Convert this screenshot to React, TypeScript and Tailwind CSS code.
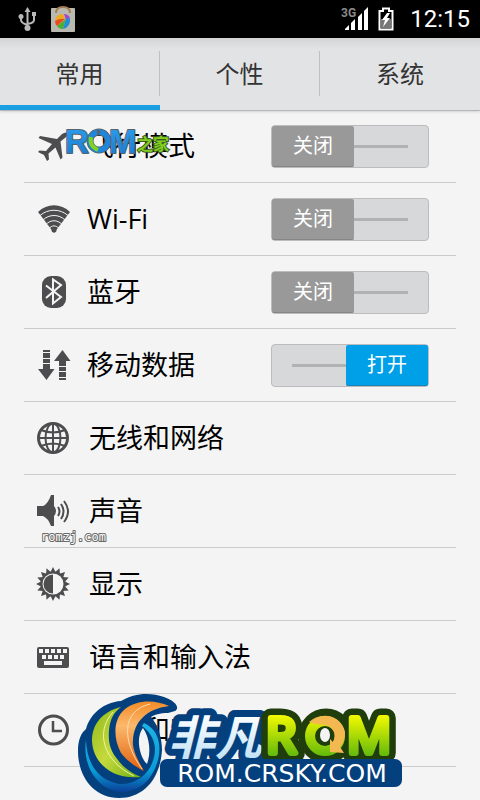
import { useState } from 'react';
import type { ReactNode } from 'react';
import clsx from 'clsx';

type ToggleItem = { id: string; label: string; icon: ReactNode; on: boolean };
type LinkItem = { id: string; label: string; icon: ReactNode };

const ICON = '#4d4d4f';

const AirplaneIcon = () => (
  <svg viewBox="0 0 36 36" className="size-9" aria-hidden="true">
    <path
      fill={ICON}
      d="M33 5c-3-1.500-6 0-8 2l-4 4-17-3-1.500 2L16 16l-6 7-6.500-.5L2 24l6 3 3 6 2-1.500-.5-6 7-6 5 12 2-2-2-16 5-4c2-2 4-4 3.500-5z"
    />
  </svg>
);

const WifiIcon = () => (
  <svg viewBox="0 0 36 36" className="size-9" aria-hidden="true">
    <path fill={ICON} d="M2 11C11 2 25 2 34 11L18 32z" />
    <g fill="none" stroke="#f4f4f4" strokeWidth="1">
      <path d="M4 14.500C12 7.500 24 7.500 32 14.500" />
      <path d="M7 19C13 13 23 13 29 19" />
      <path d="M10 23.500C14.500 18.500 21.500 18.500 26 23.500" />
      <path d="M13 27.500C16 24 20 24 23 27.500" />
    </g>
    <circle cx="18" cy="29" r="2.500" fill={ICON} />
  </svg>
);

const BluetoothIcon = () => (
  <svg viewBox="0 0 36 36" className="size-9" aria-hidden="true">
    <rect x="6" y="2" width="24" height="32" rx="9" fill={ICON} />
    <path d="M10 11.500L25 23l-8 6.500v-24L25 11 10 24" fill="none" stroke="#f4f4f4" strokeWidth="2" />
  </svg>
);

const DataIcon = () => (
  <svg viewBox="0 0 36 36" className="size-9" fill={ICON} aria-hidden="true">
    <path d="M7 3h7v2H7zM7 6h7v5H7zM7 12h7v4H7zM7 17h7v5h4.500L10.500 33 2 22h5z" />
    <path d="M23 33h7v-2h-7zM23 30h7v-5h-7zM23 24h7v-4h-7zM23 19h7v-5h4.500L26.500 3 18 14h5z" />
  </svg>
);

const GlobeIcon = () => (
  <svg viewBox="0 0 36 36" className="size-9" fill="none" stroke={ICON} strokeWidth="2" aria-hidden="true">
    <circle cx="17" cy="18" r="14.500" strokeWidth="3" />
    <ellipse cx="17" cy="18" rx="7.500" ry="14.500" />
    <path d="M17 3v30M2 18h30M5 10q12 5 24 0M5 26q12-5 24 0" />
  </svg>
);

const SoundIcon = () => (
  <svg viewBox="0 0 36 36" className="size-9" aria-hidden="true">
    <path fill={ICON} d="M1 13h6q5-2 8-11h3v11q4 5 0 10v10h-3q-3-8-8-10H1z" />
    <g fill="none" stroke={ICON} strokeWidth="2">
      <path d="M22 14q3 4.500 0 9" />
      <path d="M25 11q5 7.500 0 15" />
      <path d="M28 8q8 10.500 0 21" />
    </g>
  </svg>
);

const rays = Array.from({ length: 16 }, (_, i) => i * 22.5);

const DisplayIcon = () => (
  <svg viewBox="0 0 36 36" className="size-9" aria-hidden="true">
    {rays.map((angle) => (
      <path key={angle} d="M17 1l3 6h-6z" fill={ICON} transform={`rotate(${angle} 17 18)`} />
    ))}
    <circle cx="17" cy="18" r="12.500" fill={ICON} />
    <circle cx="17" cy="18" r="10.500" fill="#f4f4f4" />
    <path d="M17 8.500a9.500 9.500 0 0 0 0 19z" fill={ICON} />
  </svg>
);

const KeyboardIcon = () => (
  <svg viewBox="0 0 36 36" className="size-9" aria-hidden="true">
    <rect x="1" y="8" width="32" height="21" rx="2" fill={ICON} />
    <path
      fill="#f4f4f4"
      d="M3 10h4v4H3zM9 10h4v4H9zM15 10h4v4h-4zM21 10h4v4h-4zM27 10h4v4h-4zM6 16h4v4H6zM12 16h4v4h-4zM18 16h4v4h-4zM24 16h4v4h-4zM8 22h18v4H8z"
    />
  </svg>
);

const ClockIcon = () => (
  <svg viewBox="0 0 36 36" className="size-9" fill="none" stroke={ICON} strokeWidth="3" aria-hidden="true">
    <circle cx="17.500" cy="18" r="14" />
    <path d="M17 9v10h9" strokeWidth="2.500" />
  </svg>
);

const toggleItems: ToggleItem[] = [
  { id: 'airplane', label: '飞行模式', icon: <AirplaneIcon />, on: false },
  { id: 'wifi', label: 'Wi-Fi', icon: <WifiIcon />, on: false },
  { id: 'bluetooth', label: '蓝牙', icon: <BluetoothIcon />, on: false },
  { id: 'data', label: '移动数据', icon: <DataIcon />, on: true },
];

const linkItems: LinkItem[] = [
  { id: 'network', label: '无线和网络', icon: <GlobeIcon /> },
  { id: 'sound', label: '声音', icon: <SoundIcon /> },
  { id: 'display', label: '显示', icon: <DisplayIcon /> },
  { id: 'language', label: '语言和输入法', icon: <KeyboardIcon /> },
  { id: 'datetime', label: '日期和时间', icon: <ClockIcon /> },
];

const tabs = ['常用', '个性', '系统'];

function StatusBar() {
  return (
    <header className="flex h-[38px] items-center bg-black pr-[10px] pl-4 text-white">
      <svg viewBox="0 0 24 28" className="h-7 w-6" fill="none" stroke="#b8b8b8" strokeWidth="2" aria-label="USB">
        <path d="M11.500 7v16M5 12v3q0 3 6.500 5M18 10v5q0 3-6.500 4" />
        <path d="M11.500 2l3 5h-6z" fill="#b8b8b8" stroke="none" />
        <circle cx="11.500" cy="23" r="3" fill="#b8b8b8" stroke="none" />
        <circle cx="5" cy="11.500" r="2.500" fill="#b8b8b8" stroke="none" />
        <path d="M16 7h4v4h-4z" fill="#b8b8b8" stroke="none" />
      </svg>
      <svg viewBox="0 0 26 28" className="ml-[10px] h-7 w-[26px]" aria-label="应用商店">
        <rect x="1" y="3" width="24" height="24" rx="1" fill="#b9b9b0" />
        <path d="M6 8q0-6 7-6t7 6" fill="none" stroke="#a67c52" strokeWidth="2" />
        <path d="M5 16q1-7 8-7l2 5q-5-1-10 2z" fill="#f0a81c" />
        <path d="M14 9q4 0 6 4l-4 2z" fill="#a347c9" />
        <path d="M5 16q5-3 10-2l-8 7q-2-2-2-5z" fill="#e84b1c" />
        <path d="M7 21l9-7-3 10q-4 0-6-3z" fill="#4fae2c" />
        <path d="M16 14l4-1q1 9-7 11z" fill="#218dd6" />
      </svg>
      <div className="ml-auto flex items-center">
        <svg viewBox="0 0 30 28" className="h-7 w-[30px]" aria-label="3G">
          <text x="1" y="12" fontSize="12" fontWeight="700" fill="#8a8a8a" fontFamily="Roboto, sans-serif">3G</text>
          <path fill="#fff" d="M5 25v-1l4-4v5zM11 25v-7l4-4v11zM18 25V12l4-4v17zM24 25V6l4-4v23z" />
        </svg>
        <svg viewBox="0 0 16 24" className="ml-2 h-6 w-4" aria-label="充电中">
          <path d="M1.500 4H5V1.500h6V4h3.500v18.500h-13z" fill="#000" stroke="#fff" strokeWidth="2" />
          <path d="M3 12h10v9H3z" fill="#777" />
          <path d="M9 6L4 13h3l-2 7 7-9H9l3-5z" fill="#fff" />
        </svg>
        <time className="ml-4 font-[Roboto,sans-serif] text-2xl leading-8">12:15</time>
      </div>
    </header>
  );
}

function Toggle({ id, on, onChange }: { id: string; on: boolean; onChange: () => void }) {
  return (
    <button
      type="button"
      role="switch"
      aria-checked={on}
      aria-labelledby={id}
      onClick={onChange}
      className={clsx(
        'mr-[27px] flex h-[43px] w-[158px] shrink-0 items-center rounded-sm border border-[#bcbcbe] bg-[#d7d8da]',
        on ? 'flex-row-reverse' : 'flex-row',
      )}
    >
      <span
        className={clsx(
          'flex h-full w-[82px] items-center justify-center rounded-xs border-b text-xl leading-6 text-white',
          on ? 'border-[#1782b5] bg-[#00a0e9]' : 'border-[#858585] bg-[#999999]',
        )}
      >
        {on ? '打开' : '关闭'}
      </span>
      <span className="h-[3px] w-[54px] bg-[#b1b2b4]" />
    </button>
  );
}

// "ROM之家" stamp over the first row
function RomHomeMark() {
  return (
    <svg viewBox="62 124 114 36" className="pointer-events-none absolute top-[13px] left-[38px] h-9 w-[114px]">
      <defs>
        <linearGradient id="sky" x1="0" y1="0" x2="0" y2="1">
          <stop offset="0" stopColor="#2f9fee" />
          <stop offset="1" stopColor="#1879cf" />
        </linearGradient>
      </defs>
      <g
        fontFamily="'Liberation Sans', sans-serif"
        fontWeight="700"
        fontSize="33"
        fill="url(#sky)"
        stroke="#56636b"
        strokeWidth="2"
        strokeLinejoin="round"
        paintOrder="stroke"
      >
        <text x="65" y="154">R</text>
        <text x="109" y="154">M</text>
      </g>
      <circle cx="99" cy="142" r="9" fill="none" stroke="#56636b" strokeWidth="7" />
      <circle cx="99" cy="142" r="9" fill="none" stroke="#1e86dc" strokeWidth="5" />
      <path d="M91 138q-2 9 7 13" fill="none" stroke="#7ed321" strokeWidth="4" />
      <path d="M97 130l4 3-4 4z" fill="#56636b" />
      <text
        x="137"
        y="151"
        fontFamily="'Noto Sans CJK SC', sans-serif"
        fontWeight="700"
        fontSize="16"
        fill="#7fd01f"
        stroke="#41591f"
        strokeWidth="2"
        paintOrder="stroke"
      >
        之家
      </text>
    </svg>
  );
}

function DomainMark() {
  return (
    <svg viewBox="40 528 70 18" className="pointer-events-none absolute bottom-px left-4 h-[18px] w-[70px]">
      <text
        x="41"
        y="541"
        fontFamily="'DejaVu Sans Mono', monospace"
        fontSize="12"
        fill="#ffffff"
        stroke="#6a6a6a"
        strokeWidth="2"
        strokeLinejoin="round"
        paintOrder="stroke"
      >
        romzj.com
      </text>
    </svg>
  );
}

// Large "非凡ROM" banner that covers the foot of the list
function BannerMark() {
  return (
    <svg viewBox="76 690 332 110" className="pointer-events-none absolute -top-1 left-[52px] h-[110px] w-[332px]">
      <defs>
        <linearGradient id="lime" x1="0" y1="0" x2="1" y2="1">
          <stop offset="0" stopColor="#8fb91c" />
          <stop offset="0.5" stopColor="#c5da3c" />
          <stop offset="1" stopColor="#6fae14" />
        </linearGradient>
        <linearGradient id="amber" x1="0" y1="0" x2="0" y2="1">
          <stop offset="0" stopColor="#f28c28" />
          <stop offset="0.35" stopColor="#fcb86c" />
          <stop offset="1" stopColor="#e0600e" />
        </linearGradient>
        <linearGradient id="aqua" x1="0" y1="0" x2="0" y2="1">
          <stop offset="0" stopColor="#1cb4e6" />
          <stop offset="0.7" stopColor="#0a9bd6" />
          <stop offset="1" stopColor="#0a3f96" />
        </linearGradient>
        <linearGradient id="ice" x1="0" y1="0" x2="0" y2="1">
          <stop offset="0.2" stopColor="#ffffff" />
          <stop offset="1" stopColor="#b5dcf4" />
        </linearGradient>
        <linearGradient id="leaf" gradientUnits="userSpaceOnUse" x1="0" y1="715" x2="0" y2="757">
          <stop offset="0" stopColor="#f4fa00" />
          <stop offset="1" stopColor="#5fb80c" />
        </linearGradient>
      </defs>

      <path
        fill="#04407e"
        d="M121 701C134 693 150 692 164 697C176 701 180 708 175 711L168 713C160 713 154 715 151 717C158 725 162 738 162 750C160 780 143 798 119 798C94 798 78 777 78 751C78 740 81 733 86 729C90 714 104 702 121 701z"
      />
      <path d="M143 728C150 738 151 753 147 764C140 758 135 738 143 728z" fill="#f4f4f4" />
      <path
        d="M86 740C87 764 98 780 119 784C140 785 155 769 155 748C154 738 149 731 142 726L144 723C158 729 162 745 158 760C152 781 139 792 120 792C98 790 82 766 86 740z"
        fill="url(#aqua)"
      />
      <path
        d="M121 707C101 712 92 725 92 741C93 763 112 780 141 777C131 773 122 766 118 760C110 751 108 742 109 730C110 719 114 712 121 707z"
        fill="url(#lime)"
      />
      <path d="M113 712C95 732 103 761 134 776" fill="none" stroke="#eff5a5" strokeWidth="1" />
      <path
        d="M169 706C154 699 136 700 125 709C113 719 113 738 121 753C127 761 136 767 144 771C136 757 132 748 133 740C134 722 146 709 169 706z"
        fill="url(#amber)"
      />
      <path d="M150 704C121 711 122 741 142 769" fill="none" stroke="#ffdcae" strokeWidth="1" />

      <text
        x="168"
        y="755"
        fontFamily="'Noto Sans CJK SC', sans-serif"
        fontWeight="700"
        fontStyle="italic"
        fontSize="47"
        stroke="#04407e"
        strokeWidth="14"
        strokeLinejoin="round"
        paintOrder="stroke"
        fill="url(#ice)"
      >
        非凡
      </text>

      <g
        fontFamily="'Open Sans', sans-serif"
        fontWeight="400"
        fontSize="49"
        strokeLinejoin="round"
      >
        <g fill="#203d0c" stroke="#203d0c" strokeWidth="19">
          <text x="266" y="753">R</text>
          <text x="347" y="753">M</text>
          <circle cx="326" cy="736" r="18" />
        </g>
        <g fill="url(#leaf)" stroke="url(#leaf)" strokeWidth="6">
          <text x="266" y="753">R</text>
          <text x="347" y="753">M</text>
        </g>
      </g>
      <circle cx="325" cy="736" r="15" fill="none" stroke="url(#leaf)" strokeWidth="10" />
      <ellipse cx="325" cy="735" rx="5" ry="7" fill="#f4f4f4" />
      <path
        d="M309 722C322 710 342 716 345 732C345 739 343 744 340 747L344 753L330 752L330 739L333 742C337 734 333 726 325 725C318 724 314 724 309 722z"
        fill="#f4b850"
      />

      <rect x="160" y="759" width="242" height="28" rx="7" fill="#04407e" />
      <text
        x="282"
        y="782"
        textAnchor="middle"
        fontFamily="'DejaVu Sans', sans-serif"
        fontSize="25"
        fill="#fff"
      >
        ROM.CRSKY.COM
      </text>
    </svg>
  );
}

export default function App() {
  const [activeTab, setActiveTab] = useState(0);
  const [states, setStates] = useState<Record<string, boolean>>(
    Object.fromEntries(toggleItems.map((item) => [item.id, item.on])),
  );

  const flip = (id: string) => setStates((prev) => ({ ...prev, [id]: !prev[id] }));

  return (
    <div className="min-h-screen overflow-hidden bg-[#f4f4f4] font-['Open_Sans','Noto_Sans_CJK_SC',sans-serif] text-black">
      <StatusBar />
      <nav
        role="tablist"
        className="grid h-[73px] grid-cols-3 border-b border-[#b5b6b8] bg-linear-to-b from-[#d3d4d6] via-[#e2e3e5] via-15% to-[#e2e3e5] shadow-sm"
      >
        {tabs.map((tab, i) => (
          <button
            key={tab}
            type="button"
            role="tab"
            aria-selected={activeTab === i}
            onClick={() => setActiveTab(i)}
            className={clsx(
              'flex items-center border-b-5 pt-1 text-2xl text-[#333333]',
              activeTab === i ? 'border-[#1b9fe2]' : 'border-transparent',
            )}
          >
            <span className="flex-1">{tab}</span>
            {i < tabs.length - 1 && <span className="h-[45px] w-px bg-[#bfc0c2]" />}
          </button>
        ))}
      </nav>

      <main className="-mt-px px-6">
        <ul>
          {toggleItems.map((item) => (
            <li key={item.id} className="relative flex h-[73px] items-center gap-[15px] border-b border-[#cbcbcb] pl-3">
              {item.icon}
              <span id={item.id} className="flex-1 text-[27px] leading-9">
                {item.label}
              </span>
              <Toggle id={item.id} on={states[item.id]} onChange={() => flip(item.id)} />
              {item.id === 'airplane' && <RomHomeMark />}
            </li>
          ))}
          {linkItems.map((item) => (
            <li key={item.id} className="relative h-[73px] border-b border-[#cbcbcb]">
              <a href={`#${item.id}`} className="flex h-full items-center gap-[17px] pl-3">
                {item.icon}
                <span className="text-[27px] leading-9">{item.label}</span>
              </a>
              {item.id === 'sound' && <DomainMark />}
              {item.id === 'datetime' && <BannerMark />}
            </li>
          ))}
        </ul>
      </main>
    </div>
  );
}
